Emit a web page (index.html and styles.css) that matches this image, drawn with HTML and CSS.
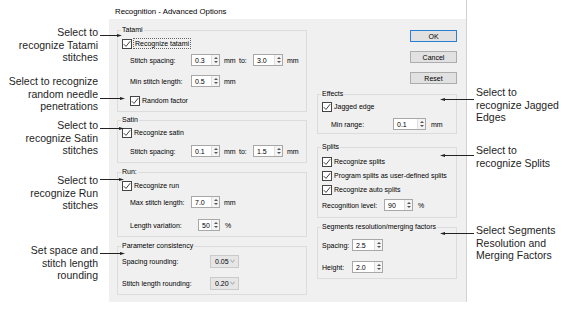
FILE: index.html
```html
<!DOCTYPE html>
<html>
<head>
<meta charset="utf-8">
<title>Recognition - Advanced Options</title>
<link rel="stylesheet" href="styles.css">
</head>
<body>
<div class="page">
  <div class="gutter gutter-l">
    <div class="note note-l n-tatami">Select to<br>recognize Tatami<br>stitches</div>
    <div class="note note-l n-random">Select to recognize<br>random needle<br>penetrations</div>
    <div class="note note-l n-satin">Select to<br>recognize Satin<br>stitches</div>
    <div class="note note-l n-run">Select to<br>recognize Run<br>stitches</div>
    <div class="note note-l n-param">Set space and<br>stitch length<br>rounding</div>
  </div>

  <div class="dialog">
    <div class="titlebar">Recognition - Advanced Options</div>
    <div class="dlg-body">
      <div class="col col-left">
        <fieldset class="grp g-tatami">
          <legend>Tatami</legend>
          <div class="row t1"><span class="cb"><svg viewBox="0 0 8 8"><path d="M0.8 4.2 L3 6.4 L7.2 1.2"/></svg></span><span class="focus">Recognize tatami</span></div>
          <div class="row field ind t2"><span class="lbl w61">Stitch spacing:</span><span class="spin w29"><span class="val">0.3</span><span class="arr"></span></span><span class="unit">mm</span><span class="to">to:</span><span class="spin w30"><span class="val">3.0</span><span class="arr"></span></span><span class="unit">mm</span></div>
          <div class="row field ind t3"><span class="lbl w61">Min stitch length:</span><span class="spin w29"><span class="val">0.5</span><span class="arr"></span></span><span class="unit">mm</span></div>
          <div class="row ind t4"><span class="cb"><svg viewBox="0 0 8 8"><path d="M0.8 4.2 L3 6.4 L7.2 1.2"/></svg></span><span class="txt">Random factor</span></div>
        </fieldset>

        <fieldset class="grp g-satin">
          <legend>Satin</legend>
          <div class="row s1"><span class="cb"><svg viewBox="0 0 8 8"><path d="M0.8 4.2 L3 6.4 L7.2 1.2"/></svg></span><span class="txt">Recognize satin</span></div>
          <div class="row field ind s2"><span class="lbl w61">Stitch spacing:</span><span class="spin w29"><span class="val">0.1</span><span class="arr"></span></span><span class="unit">mm</span><span class="to">to:</span><span class="spin w30"><span class="val">1.5</span><span class="arr"></span></span><span class="unit">mm</span></div>
        </fieldset>

        <fieldset class="grp g-run">
          <legend>Run:</legend>
          <div class="row r1"><span class="cb"><svg viewBox="0 0 8 8"><path d="M0.8 4.2 L3 6.4 L7.2 1.2"/></svg></span><span class="txt">Recognize run</span></div>
          <div class="row field ind r2"><span class="lbl w61">Max stitch length:</span><span class="spin w29"><span class="val">7.0</span><span class="arr"></span></span><span class="unit">mm</span></div>
          <div class="row field ind r3"><span class="lbl w68">Length variation:</span><span class="spin w22"><span class="val">50</span><span class="arr"></span></span><span class="unit pct">%</span></div>
        </fieldset>

        <fieldset class="grp g-param">
          <legend>Parameter consistency</legend>
          <div class="row field p1"><span class="lbl w88">Spacing rounding:</span><span class="dd">0.05<svg viewBox="0 0 6 4"><path d="M0.5 0.8 L3 3.2 L5.5 0.8"/></svg></span></div>
          <div class="row field p2"><span class="lbl w88">Stitch length rounding:</span><span class="dd">0.20<svg viewBox="0 0 6 4"><path d="M0.5 0.8 L3 3.2 L5.5 0.8"/></svg></span></div>
        </fieldset>
      </div>

      <div class="col col-right">
        <div class="buttons">
          <div class="btn def">OK</div>
          <div class="btn">Cancel</div>
          <div class="btn">Reset</div>
        </div>

        <fieldset class="grp g-effects">
          <legend>Effects</legend>
          <div class="row e1"><span class="cb"><svg viewBox="0 0 8 8"><path d="M0.8 4.2 L3 6.4 L7.2 1.2"/></svg></span><span class="txt">Jagged edge</span></div>
          <div class="row field ind9 e2"><span class="lbl w62">Min range:</span><span class="spin w33"><span class="val">0.1</span><span class="arr"></span></span><span class="unit u5">mm</span></div>
        </fieldset>

        <fieldset class="grp g-splits">
          <legend>Splits</legend>
          <div class="row sp1"><span class="cb"><svg viewBox="0 0 8 8"><path d="M0.8 4.2 L3 6.4 L7.2 1.2"/></svg></span><span class="txt">Recognize splits</span></div>
          <div class="row sp2"><span class="cb"><svg viewBox="0 0 8 8"><path d="M0.8 4.2 L3 6.4 L7.2 1.2"/></svg></span><span class="txt">Program splits as user-defined splits</span></div>
          <div class="row sp3"><span class="cb"><svg viewBox="0 0 8 8"><path d="M0.8 4.2 L3 6.4 L7.2 1.2"/></svg></span><span class="txt">Recognize auto splits</span></div>
          <div class="row field sp4"><span class="lbl w62">Recognition level:</span><span class="spin w29"><span class="val">90</span><span class="arr"></span></span><span class="unit u5">%</span></div>
        </fieldset>

        <fieldset class="grp g-seg">
          <legend>Segments resolution/merging factors</legend>
          <div class="row field sg1"><span class="lbl w30">Spacing:</span><span class="spin w31"><span class="val">2.5</span><span class="arr"></span></span></div>
          <div class="row field sg2"><span class="lbl w30">Height:</span><span class="spin w31"><span class="val">2.0</span><span class="arr"></span></span></div>
        </fieldset>
      </div>
    </div>
  </div>

  <div class="gutter gutter-r">
    <div class="note note-r n-jag">Select to<br>recognize Jagged<br>Edges</div>
    <div class="note note-r n-spl">Select to<br>recognize Splits</div>
    <div class="note note-r n-seg">Select Segments<br>Resolution and<br>Merging Factors</div>
  </div>

  <svg class="leaders" viewBox="0 0 566 316" width="566" height="316">
    <g class="ln">
      <path d="M100 35.5 H118"/>
      <path d="M100 98.5 H121"/>
      <path d="M100 128.5 H120"/>
      <path d="M100 179.5 H120"/>
      <path d="M100 253.5 H121"/>
      <path d="M443 99.5 H474"/>
      <path d="M443 155.5 H474"/>
      <path d="M443 233.5 H474"/>
    </g>
    <g class="hd">
      <polygon points="122,35.5 117,34 117,37"/>
      <polygon points="125,98.5 120,97 120,100"/>
      <polygon points="124,128.5 119,127 119,130"/>
      <polygon points="124,179.5 119,178 119,181"/>
      <polygon points="125,253.5 120,252 120,255"/>
      <polygon points="440,99.5 445,98 445,101"/>
      <polygon points="440,155.5 445,154 445,157"/>
      <polygon points="440,233.5 445,232 445,235"/>
    </g>
  </svg>
</div>
</body>
</html>
```

FILE: styles.css
```css
* { box-sizing: border-box; }

body {
  margin: 0;
  background: #fff;
  font-family: "Liberation Sans", Arial, sans-serif;
  color: #000;
}

.page {
  position: relative;
  width: 566px;
  height: 316px;
  display: flex;
  align-items: flex-start;
  overflow: hidden;
}

/* ---------- callout gutters ---------- */
.gutter { position: relative; height: 316px; flex: none; }
.gutter-l { width: 109px; }
.gutter-r { flex: 1; }

.note {
  position: absolute;
  font-size: 10.5px;
  line-height: 12.5px;
  color: #1e1e1e;
  white-space: nowrap;
}
.note-l { right: 11px; text-align: right; }
.note-r { left: 9px; text-align: left; }

.n-tatami { top: 26px; }
.n-random { top: 75px; }
.n-satin  { top: 119px; }
.n-run    { top: 174px; }
.n-param  { top: 244px; }
.n-jag    { top: 86px; }
.n-spl    { top: 144px; }
.n-seg    { top: 224px; }

.leaders {
  position: absolute;
  left: 0;
  top: 0;
  pointer-events: none;
}
.leaders .ln path { stroke: #222; stroke-width: 1; fill: none; }
.leaders .hd polygon { fill: #222; }

/* ---------- dialog ---------- */
.dialog {
  width: 358px;
  height: 302px;
  flex: none;
  display: flex;
  flex-direction: column;
  border-right: 1px solid #d2d2d2;
}

.titlebar {
  height: 19px;
  flex: none;
  background: #fff;
  padding: 4px 0 0 6px;
  font-size: 7.8px;
  line-height: 16px;
  color: #000;
  white-space: nowrap;
}

.dlg-body {
  flex: 1;
  background: #f0f0f0;
  display: flex;
  align-items: flex-start;
  gap: 10px;
  padding: 7px 9px 0 8px;
  font-size: 7px;
  color: #000;
}

.col { display: flex; flex-direction: column; flex: none; }
.col-left { width: 190px; }
.col-right { width: 140px; }

/* group boxes */
.grp {
  margin: 0;
  padding: 0 0 5px 4px;
  border: 1px solid #dcdcdc;
  min-width: 0;
}
.grp legend {
  font-size: 7px;
  line-height: 8px;
  padding: 0 1px;
  margin-left: -1px;
  color: #000;
}

.g-satin  { margin-top: 4px; }
.g-run    { margin-top: 5px; }
.g-param  { margin-top: 5px; }
.g-effects { margin-top: 6px; padding-bottom: 3px; }
.g-splits { margin-top: 9px; padding-bottom: 6px; }
.g-seg    { margin-top: 5px; }

/* rows */
.row {
  display: flex;
  align-items: center;
  height: 11px;
  white-space: nowrap;
  line-height: 9px;
}
.row.field { height: 12px; }
.ind { margin-left: 8px; }
.ind9 { margin-left: 9px; }

.t1 { margin-top: 4px; }
.t2 { margin-top: 5px; }
.t3 { margin-top: 9px; }
.t4 { margin-top: 8px; }

.s1 { margin-top: 3px; }
.s2 { margin-top: 7px; }

.r1 { margin-top: 4px; }
.r2 { margin-top: 5px; }
.r3 { margin-top: 11px; }

.p1 { margin-top: 5px; height: 13px; }
.p2 { margin-top: 10px; height: 13px; }

.e1 { margin-top: 3px; }
.e2 { margin-top: 6px; height: 11px; }

.sp1 { margin-top: 5px; }
.sp2 { margin-top: 3px; }
.sp3 { margin-top: 3px; }
.sp4 { margin-top: 4px; }

.sg1 { margin-top: 8px; height: 11px; }
.sg2 { margin-top: 10px; height: 11px; }

/* checkbox */
.cb {
  width: 10px;
  height: 10px;
  flex: none;
  border: 1px solid #444;
  background: #fff;
  display: flex;
  align-items: center;
  justify-content: center;
  margin-right: 1px;
}
.cb svg { width: 8px; height: 8px; display: block; }
.cb path { fill: none; stroke: #2a2a2a; stroke-width: 0.9; }

.txt { padding-left: 1px; }

.focus {
  border: 1px dotted #666;
  padding: 0 1px;
  height: 11px;
  line-height: 9px;
}

/* labels & units */
.lbl { flex: none; }
.w30 { width: 30px; }
.w61 { width: 61px; }
.w62 { width: 62px; }
.w68 { width: 68px; }
.w88 { width: 88px; }

.unit { width: 13px; margin-left: 4px; flex: none; }
.unit.pct { margin-left: 5px; }
.unit.u5 { margin-left: 5px; }
.to { width: 16px; padding-left: 2px; flex: none; }

/* spin boxes */
.spin {
  display: flex;
  height: 100%;
  flex: none;
  border: 1px solid #a8a8a8;
  background: #fff;
}
.w22 { width: 22px; }
.w29 { width: 29px; }
.w30 { width: 30px; }
.w31 { width: 31px; }
.w33 { width: 33px; }
.spin .val {
  flex: 1;
  padding-left: 3px;
  display: flex;
  align-items: center;
}
.spin .arr {
  width: 8px;
  flex: none;
  background: #f4f4f4;
  border-left: 1px solid #e0e0e0;
  display: flex;
  flex-direction: column;
  align-items: center;
  justify-content: space-around;
  padding: 1px 0;
}
.spin .arr::before,
.spin .arr::after {
  content: "";
  width: 0;
  height: 0;
  border-left: 2px solid transparent;
  border-right: 2px solid transparent;
}
.spin .arr::before { border-bottom: 2px solid #555; }
.spin .arr::after  { border-top: 2px solid #555; }

/* dropdowns */
.dd {
  width: 29px;
  height: 13px;
  flex: none;
  display: flex;
  align-items: center;
  justify-content: space-between;
  padding: 0 3px 0 4px;
  border: 1px solid #cacaca;
  background: #e6e6e6;
}
.dd svg { width: 5px; height: 4px; display: block; }
.dd path { fill: none; stroke: #666; stroke-width: 0.8; }

/* buttons */
.buttons {
  display: flex;
  flex-direction: column;
  align-items: flex-end;
  gap: 9px;
  padding-top: 4px;
}
.btn {
  width: 47px;
  height: 12px;
  border: 1px solid #adadad;
  background: #e1e1e1;
  display: flex;
  align-items: center;
  justify-content: center;
  font-size: 7px;
  color: #000;
}
.btn.def { border-color: #2a7fd4; }
```
